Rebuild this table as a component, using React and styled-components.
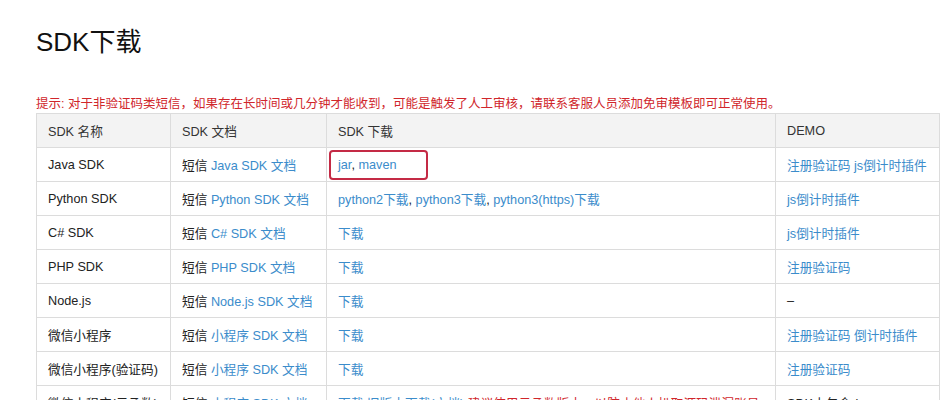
import styled, { createGlobalStyle } from "styled-components";

const GlobalStyle = createGlobalStyle`
  html, body {
    margin: 0;
    padding: 0;
    background: #fff;
  }
  body {
    font-family: "Liberation Sans", "Noto Sans CJK SC", sans-serif;
    color: #333;
    overflow: hidden;
  }
`;

const rows = [
  {
    name: "Java SDK",
    doc: "Java SDK 文档",
    download: [{ text: "jar, maven", mark: true }],
    demo: ["注册验证码", "js倒计时插件"],
  },
  {
    name: "Python SDK",
    doc: "Python SDK 文档",
    download: [{ text: "python2下载" }, { sep: ", " }, { text: "python3下载" }, { sep: ", " }, { text: "python3(https)下载" }],
    demo: ["js倒计时插件"],
  },
  { name: "C# SDK", doc: "C# SDK 文档", download: [{ text: "下载" }], demo: ["js倒计时插件"] },
  { name: "PHP SDK", doc: "PHP SDK 文档", download: [{ text: "下载" }], demo: ["注册验证码"] },
  { name: "Node.js", doc: "Node.js SDK 文档", download: [{ text: "下载" }], demo: null },
  { name: "微信小程序", doc: "小程序 SDK 文档", download: [{ text: "下载" }], demo: ["注册验证码", "倒计时插件"] },
  { name: "微信小程序(验证码)", doc: "小程序 SDK 文档", download: [{ text: "下载" }], demo: ["注册验证码"] },
  {
    name: "微信小程序(云函数)",
    doc: "小程序 SDK 文档",
    download: [
      { text: "下载" },
      { sep: " " },
      { text: "旧版本下载(文档)" },
      { warn: " 建议使用云函数版本，以防止他人扒取源码泄漏账号" },
    ],
    demo: "SDK中包含demo",
  },
];

const App = () => {
  return (
    <>
      <GlobalStyle />
      <Page>
        <Title>SDK下载</Title>
        <Notice>提示: 对于非验证码类短信，如果存在长时间或几分钟才能收到，可能是触发了人工审核，请联系客服人员添加免审模板即可正常使用。</Notice>
        <Table>
          <colgroup>
            <col style={{ width: 134 }} />
            <col style={{ width: 156 }} />
            <col style={{ width: 449 }} />
            <col style={{ width: 164 }} />
          </colgroup>
          <thead>
            <tr>
              <Th>SDK 名称</Th>
              <Th>SDK 文档</Th>
              <Th>SDK 下载</Th>
              <Th>DEMO</Th>
            </tr>
          </thead>
          <tbody>
            {rows.map((r) => (
              <tr key={r.name}>
                <Td>{r.name}</Td>
                <Td>
                  短信 <Link>{r.doc}</Link>
                </Td>
                <Td>
                  {r.download.map((d, i) => {
                    if (d.sep) return <span key={i}>{d.sep}</span>;
                    if (d.warn) return <Warn key={i}>{d.warn}</Warn>;
                    if (d.mark)
                      return (
                        <Marked key={i}>
                          <Link>jar</Link>, <Link>maven</Link>
                        </Marked>
                      );
                    return <Link key={i}>{d.text}</Link>;
                  })}
                </Td>
                <Td>
                  {r.demo === null && <span>–</span>}
                  {typeof r.demo === "string" && <span>{r.demo}</span>}
                  {Array.isArray(r.demo) &&
                    r.demo.map((d, i) => (
                      <span key={i}>
                        {i > 0 && " "}
                        <Link>{d}</Link>
                      </span>
                    ))}
                </Td>
              </tr>
            ))}
          </tbody>
        </Table>
      </Page>
    </>
  );
};

const Page = styled.div`
  padding: 27px 12px 0 36px;
`;

const Title = styled.h1`
  margin: 0;
  font-size: 26px;
  font-weight: normal;
  line-height: 31px;
  color: #111;
`;

const Notice = styled.p`
  margin: 37px 0 0;
  font-size: 12.5px;
  line-height: 18px;
  color: #d0262b;
  white-space: nowrap;
`;

const Table = styled.table`
  border-collapse: collapse;
  table-layout: fixed;
  width: 903px;
  font-size: 12.7px;
`;

const Th = styled.th`
  height: 33px;
  padding: 0 11px;
  text-align: left;
  font-weight: normal;
  background: #f3f3f3;
  border: 1px solid #dcdcdc;
  color: #333;
`;

const Td = styled.td`
  height: 33px;
  padding: 0 11px;
  border: 1px solid #dcdcdc;
  white-space: nowrap;
  color: #222;
`;

const Link = styled.a`
  color: #3b8ccb;
  text-decoration: none;
  cursor: pointer;
`;

const Warn = styled.span`
  color: #d0262b;
`;

const Marked = styled.span`
  position: relative;
  &::after {
    content: "";
    position: absolute;
    left: -9px;
    right: -31px;
    top: -8px;
    bottom: -8px;
    border: 2px solid #c42a45;
    border-radius: 4px;
  }
`;

export default App;
